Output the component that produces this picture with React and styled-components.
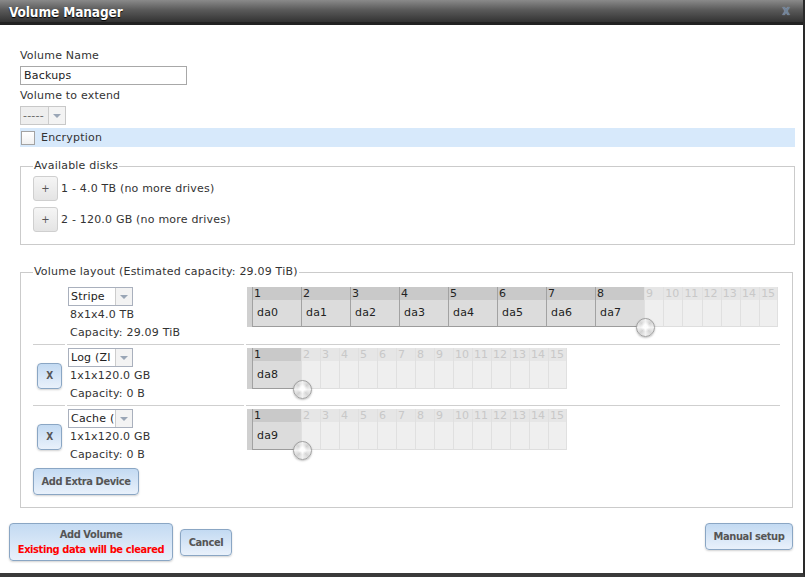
import React from 'react'
import styled, { createGlobalStyle } from 'styled-components'

const GlobalStyle = createGlobalStyle`
  html, body {
    margin: 0;
    padding: 0;
    background: #fff;
  }
  body {
    font-family: "DejaVu Sans", Verdana, sans-serif;
    font-size: 11px;
    letter-spacing: 0.2px;
    color: #333;
  }
`

const Dialog = styled.div`
  width: 805px;
  height: 577px;
  box-sizing: border-box;
  border-right: 2px solid #2a2a2a;
  border-bottom: 4px solid #3a3a3a;
  display: flex;
  flex-direction: column;
  background: #fff;
`

const TitleBar = styled.div`
  height: 22px;
  border-bottom: 3px solid #222;
  background: linear-gradient(#8a8a8a, #5a5a5a 45%, #333);
  display: flex;
  align-items: center;
  justify-content: space-between;
  padding: 0 13px 0 9px;
`

const Title = styled.span`
  font-family: "DejaVu Sans Condensed", "DejaVu Sans", sans-serif;
  font-stretch: condensed;
  font-weight: bold;
  font-size: 13.5px;
  color: #fff;
  text-shadow: 0 1px 1px #000;
  letter-spacing: -0.1px;
  margin-top: 1px;
`

const Close = styled.span`
  font-family: "DejaVu Sans Condensed", "DejaVu Sans", sans-serif;
  font-weight: bold;
  font-size: 11px;
  color: #6f8398;
  text-shadow: 0 0 1px #a9b9c9;
`

const Body = styled.div`
  flex: 1;
  display: flex;
  flex-direction: column;
  padding: 24px 8px 0 20px;
`

const Label = styled.div`
  line-height: 14px;
  margin-top: ${p => p.$mt || 0}px;
`

const TextInput = styled.div`
  width: 167px;
  height: 19px;
  box-sizing: border-box;
  border: 1px solid #a8a8a8;
  margin-top: 3px;
  padding-left: 3px;
  line-height: 17px;
  color: #222;
`

const Select = styled.div`
  width: ${p => p.$w}px;
  height: 19px;
  box-sizing: border-box;
  border: 1px solid ${p => (p.$disabled ? '#c8c8c8' : '#a9b0bd')};
  background: ${p => (p.$disabled ? '#eee' : '#fff')};
  display: flex;
  margin-top: ${p => p.$mt || 0}px;
`

const SelectText = styled.span`
  flex: 1;
  overflow: hidden;
  white-space: nowrap;
  padding-left: 2px;
  line-height: 17px;
  color: ${p => (p.$disabled ? '#666' : '#222')};
`

const SelectArrow = styled.span`
  width: 16px;
  flex: none;
  border-left: 1px solid #ccc;
  background: #f3f3f3;
  display: flex;
  align-items: center;
  justify-content: center;
  &::after {
    content: '';
    border-left: 4px solid transparent;
    border-right: 4px solid transparent;
    border-top: 4px solid #9aa6b6;
  }
`

const CheckRow = styled.div`
  margin-top: 3px;
  height: 19px;
  background: #d7e9fb;
  display: flex;
  align-items: center;
  gap: 6px;
  padding-left: 1px;
`

const CheckBox = styled.span`
  width: 14px;
  height: 14px;
  box-sizing: border-box;
  border: 1px solid #a3a3a3;
  background: linear-gradient(#fff, #f1f1f1);
`

const Fieldset = styled.fieldset`
  margin: ${p => p.$mt}px ${p => p.$mr || 0}px 0 0;
  padding: ${p => p.$pt}px 12px ${p => p.$pb}px 12px;
  border: 1px solid #cbcbcb;
  min-width: 0;
`

const Legend = styled.legend`
  padding: 0 1px;
  line-height: 14px;
  color: #333;
`

const DiskLine = styled.div`
  display: flex;
  align-items: center;
  gap: 3px;
  margin-bottom: ${p => p.$mb || 0}px;
`

const PlusButton = styled.span`
  width: 25px;
  height: 25px;
  box-sizing: border-box;
  border: 1px solid #cfcfcf;
  border-radius: 3px;
  background: linear-gradient(#f5f5f5, #e4e4e4);
  display: flex;
  align-items: center;
  justify-content: center;
  font-size: 10px;
  color: #555;
`

const LayoutRow = styled.div`
  display: grid;
  grid-template-columns: 32px 177px 1fr;
  column-gap: 2px;
`

const Cell = styled.div`
  padding: 3px 0 2px 1px;
  border-bottom: ${p => (p.$last ? 'none' : '1px solid #cfcfcf')};
  display: flex;
  flex-direction: column;
  justify-content: ${p => (p.$center ? 'center' : 'flex-start')};
  align-items: ${p => (p.$center ? 'center' : 'stretch')};
`

const InfoLine = styled.div`
  line-height: 18px;
  padding-left: 2px;
  color: #333;
`

const BlueButton = styled.button`
  font-family: "DejaVu Sans Condensed", "DejaVu Sans", sans-serif;
  font-stretch: condensed;
  font-weight: bold;
  font-size: ${p => p.$fs || 11}px;
  letter-spacing: -0.4px;
  color: #555;
  background: linear-gradient(#c3daf2, #e9f1fb);
  border: 1px solid #8aa6c4;
  border-radius: 4px;
  box-shadow: 0 1px 2px rgba(0, 0, 0, 0.18);
  width: ${p => p.$w}px;
  height: ${p => p.$h}px;
  margin-top: ${p => p.$mt || 0}px;
  padding: 0;
  line-height: 15px;
  cursor: pointer;
  flex: none;
`

const Warn = styled.span`
  display: block;
  color: #f00;
`

const Grid = styled.div`
  position: relative;
  display: flex;
  align-self: flex-start;
  border-left: 5px solid #d0d0d0;
`

const Slot = styled.div`
  width: ${p => (p.$used ? 49 : p.$w || 19)}px;
  flex: none;
  box-sizing: border-box;
  border-left: 1px solid ${p => (p.$used ? '#a2a2a2' : '#e0e0e0')};
  border-right: ${p => (p.$end ? '1px solid #e0e0e0' : 'none')};
  border-bottom: 1px solid ${p => (p.$used ? '#9c9c9c' : '#dedede')};
  background: ${p => (p.$used ? '#dcdcdc' : '#efefef')};
`

const SlotHead = styled.div`
  height: 13px;
  line-height: 13px;
  padding-left: 1px;
  letter-spacing: 0;
  background: ${p => (p.$used ? '#c9c9c9' : '#e6e6e6')};
  color: ${p => (p.$used ? '#222' : '#c8c8c8')};
`

const SlotBody = styled.div`
  height: ${p => p.$h}px;
  line-height: ${p => p.$h}px;
  padding-left: 4px;
  color: #222;
`

const Knob = styled.span`
  position: absolute;
  width: 19px;
  height: 19px;
  box-sizing: border-box;
  border-radius: 50%;
  border: 1px solid #a0a0a0;
  background:
    radial-gradient(circle at 50% 45%, rgba(255,255,255,0.95) 0 2px, rgba(255,255,255,0) 5px),
    conic-gradient(#f2f2f2, #d2d2d2, #f2f2f2, #d6d6d6, #f2f2f2, #d2d2d2, #f2f2f2, #d6d6d6, #f2f2f2);
  box-shadow: 0 1px 2px rgba(0, 0, 0, 0.25);
`

const Footer = styled.div`
  display: flex;
  align-items: flex-start;
  padding: 15px 10px 0 9px;
  margin-left: -20px;
  margin-right: -8px;
`

const FooterLeft = styled.div`
  display: flex;
  align-items: center;
  gap: 7px;
  flex: 1;
`

const DiskGrid = ({ disks, bodyHeight, unusedWidth }) => {
  const slots = Array.from({ length: 15 }, (_, i) => i)
  return (
    <Grid>
      {slots.map(i => {
        const used = i < disks.length
        return (
          <Slot key={i} $used={used} $w={unusedWidth} $end={i === 14}>
            <SlotHead $used={used}>{i + 1}</SlotHead>
            <SlotBody $h={bodyHeight}>{used ? disks[i] : ''}</SlotBody>
          </Slot>
        )
      })}
      <Knob style={{ left: disks.length * 49 - 8, top: 13 + bodyHeight - 8 }} />
    </Grid>
  )
}

const rows = [
  { type: 'Stripe', size: '8x1x4.0 TB', cap: 'Capacity: 29.09 TiB', disks: ['da0', 'da1', 'da2', 'da3', 'da4', 'da5', 'da6', 'da7'], removable: false, h: 26, uw: 19.2 },
  { type: 'Log (ZI', size: '1x1x120.0 GB', cap: 'Capacity: 0 B', disks: ['da8'], removable: true, h: 27, uw: 19 },
  { type: 'Cache (', size: '1x1x120.0 GB', cap: 'Capacity: 0 B', disks: ['da9'], removable: true, h: 27, uw: 19 },
]

const App = () => {
  return (
    <>
      <GlobalStyle />
      <Dialog>
        <TitleBar>
          <Title>Volume Manager</Title>
          <Close>X</Close>
        </TitleBar>
        <Body>
          <Label>Volume Name</Label>
          <TextInput>Backups</TextInput>
          <Label $mt={4}>Volume to extend</Label>
          <Select $w={46} $mt={3} $disabled>
            <SelectText $disabled>-----</SelectText>
            <SelectArrow />
          </Select>
          <CheckRow>
            <CheckBox />
            <span>Encryption</span>
          </CheckRow>

          <Fieldset $mt={12} $pt={3} $pb={12}>
            <Legend>Available disks</Legend>
            <DiskLine $mb={6}>
              <PlusButton>+</PlusButton>
              <span>1 - 4.0 TB (no more drives)</span>
            </DiskLine>
            <DiskLine>
              <PlusButton>+</PlusButton>
              <span>2 - 120.0 GB (no more drives)</span>
            </DiskLine>
          </Fieldset>

          <Fieldset $mt={20} $mr={2} $pt={5} $pb={12}>
            <Legend>Volume layout (Estimated capacity: 29.09 TiB)</Legend>
            {rows.map((r, idx) => {
              const last = idx === rows.length - 1
              return (
                <LayoutRow key={r.size + idx}>
                  <Cell $last={last} $center>
                    {r.removable && <BlueButton $w={25} $h={26} $fs={10}>X</BlueButton>}
                  </Cell>
                  <Cell $last={last}>
                    <Select $w={65}>
                      <SelectText>{r.type}</SelectText>
                      <SelectArrow />
                    </Select>
                    <InfoLine>{r.size}</InfoLine>
                    <InfoLine>{r.cap}</InfoLine>
                  </Cell>
                  <Cell $last={last}>
                    <DiskGrid disks={r.disks} bodyHeight={r.h} unusedWidth={r.uw} />
                  </Cell>
                </LayoutRow>
              )
            })}
            <BlueButton $w={106} $h={27} $mt={2}>Add Extra Device</BlueButton>
          </Fieldset>

          <Footer>
            <FooterLeft>
              <BlueButton $w={164} $h={38}>
                Add Volume
                <Warn>Existing data will be cleared</Warn>
              </BlueButton>
              <BlueButton $w={52} $h={27}>Cancel</BlueButton>
            </FooterLeft>
            <BlueButton $w={88} $h={27}>Manual setup</BlueButton>
          </Footer>
        </Body>
      </Dialog>
    </>
  )
}

export default App
